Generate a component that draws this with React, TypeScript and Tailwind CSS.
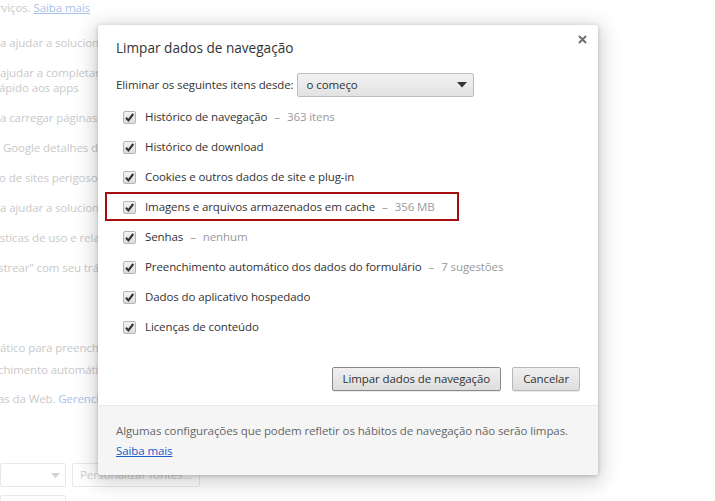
import React from "react";

type Item = { label: string; extra?: string; highlight?: boolean };

const items: Item[] = [
  { label: "Histórico de navegação", extra: "363 itens" },
  { label: "Histórico de download" },
  { label: "Cookies e outros dados de site e plug-in" },
  { label: "Imagens e arquivos armazenados em cache", extra: "356 MB", highlight: true },
  { label: "Senhas", extra: "nenhum" },
  { label: "Preenchimento automático dos dados do formulário", extra: "7 sugestões" },
  { label: "Dados do aplicativo hospedado" },
  { label: "Licenças de conteúdo" },
];

function Checkbox() {
  return (
    <span className="flex items-center justify-center w-[13px] h-[13px] shrink-0 border border-[#b5b5b5] rounded-[2px] bg-gradient-to-b from-[#f4f4f4] to-[#dcdcdc]">
      <svg width="11" height="11" viewBox="0 0 11 11">
        <path d="M2 5.8 L4.4 8.4 L9.2 2" fill="none" stroke="#333" strokeWidth="2.1" />
      </svg>
    </span>
  );
}

function GrayButton({ children, strong }: { children: React.ReactNode; strong?: boolean }) {
  return (
    <button
      className={`h-[24px] px-[10px] rounded-[2px] border bg-gradient-to-b from-[#f0f0f0] to-[#dedede] text-[#333] text-[11.5px] tracking-[-0.1px] leading-none shadow-[0_1px_0_rgba(0,0,0,0.08)] ${strong ? "border-[#8a8a8a]" : "border-[#b8b8b8]"}`}
    >
      {children}
    </button>
  );
}

function BackgroundPage() {
  const line = "h-[15px] leading-[15px] whitespace-nowrap text-[11.5px] tracking-[-0.1px] text-[#c9c9c9]";
  const link = "text-[#a9c3ec]";
  return (
    <div className="flex flex-col">
      <div className={`${line} -ml-[3px]`}>
        rviços. <span className={`${link} underline`}>Saiba mais</span>
      </div>
      <div className={`${line} mt-[20px]`}>a ajudar a solucionar</div>
      <div className={`${line} mt-[15px]`}>ajudar a completar</div>
      <div className={`${line} -ml-[1px]`}>ápido aos apps</div>
      <div className={`${line} mt-[15px]`}>a carregar páginas</div>
      <div className={`${line} mt-[15px] ml-[3px]`}>Google detalhes de</div>
      <div className={`${line} mt-[15px] -ml-[1px]`}>o de sites perigosos</div>
      <div className={`${line} mt-[15px]`}>a ajudar a solucionar</div>
      <div className={`${line} mt-[15px] -ml-[3px]`}>ísticas de uso e relat</div>
      <div className={`${line} mt-[15px] -ml-[2px]`}>strear" com seu tráfego</div>
      <div className={`${line} mt-[65px]`}>ático para preencher</div>
      <div className={`${line} mt-[7px] -ml-[2px] ${link}`}>chimento automático</div>
      <div className={`${line} mt-[14px] -ml-[2px]`}>
        as da Web. <span className={link}>Gerenciar</span>
      </div>
      <div className="flex gap-[6px] mt-[57px]">
        <div className="w-[66px] h-[24px] shrink-0 border border-[#e8e8e8] rounded-[2px] flex items-center justify-end pr-[5px]">
          <svg width="9" height="5" viewBox="0 0 9 5">
            <path d="M0 0 H9 L4.5 5 Z" fill="#d2d2d2" />
          </svg>
        </div>
        <div className="h-[24px] w-[128px] shrink-0 border border-[#e8e8e8] rounded-[2px] flex items-center justify-center text-[11.5px] text-[#cfcfcf] whitespace-nowrap">
          Personalizar fontes...
        </div>
      </div>
      <div className="w-[66px] h-[24px] mt-[8px] border border-[#e8e8e8] rounded-[2px]" />
    </div>
  );
}

export default function App() {
  return (
    <div
      className="relative w-[715px] h-[501px] overflow-hidden bg-white"
      style={{ fontFamily: '"Open Sans", "Noto Sans", sans-serif' }}
    >
      <BackgroundPage />

      {/* Dialog */}
      <div className="absolute left-[98px] top-[25px] w-[500px] bg-white rounded-[3px] shadow-[0_4px_20px_4px_rgba(0,0,0,0.18),0_1px_4px_rgba(0,0,0,0.2)] flex flex-col">
        <button className="absolute right-[11px] top-[10px] w-[9px] h-[9px]">
          <svg width="9" height="9" viewBox="0 0 9 9">
            <path d="M1 1 L8 8 M8 1 L1 8" stroke="#707070" strokeWidth="2" />
          </svg>
        </button>

        <div className="px-[18px] pt-[13px]">
          <h1 className="h-[20px] leading-[20px] text-[13.6px] text-[#333]">Limpar dados de navegação</h1>

          <div className="flex items-center gap-[3px] mt-[15px] h-[24px] text-[11.5px] tracking-[-0.1px]">
            <span className="text-[#333] whitespace-nowrap">Eliminar os seguintes itens desde:</span>
            <div className="w-[177px] h-[24px] border border-[#bcbcbc] rounded-[2px] bg-gradient-to-b from-[#f2f2f2] to-[#e2e2e2] flex items-center justify-between pl-[9px] pr-[6px]">
              <span className="text-[#333]">o começo</span>
              <svg width="10" height="6" viewBox="0 0 10 6">
                <path d="M0 0 H10 L5 5.5 Z" fill="#333" />
              </svg>
            </div>
          </div>

          <div className="flex flex-col mt-[5px] pl-[7px] text-[11.5px] tracking-[-0.1px]">
            {items.map((it) => (
              <div key={it.label} className="relative flex items-center gap-[9px] h-[30px]">
                {it.highlight && (
                  <span className="absolute -left-[18px] top-[0px] w-[354px] h-[29px] border-2 border-[#a50f0f]" />
                )}
                <Checkbox />
                <span className="text-[#333] whitespace-nowrap">
                  {it.label}
                  {it.extra && (
                    <span className="text-[#999]">
                      <span className="mx-[7px]">–</span>
                      {it.extra}
                    </span>
                  )}
                </span>
              </div>
            ))}
          </div>

          <div className="flex justify-end gap-[11px] mt-[25px]">
            <GrayButton strong>Limpar dados de navegação</GrayButton>
            <GrayButton>Cancelar</GrayButton>
          </div>
        </div>

        <div className="mt-[14px] border-t border-[#e8e8e8] bg-[#f5f5f5] rounded-b-[3px] h-[70px] px-[18px] pt-[16px] text-[11.5px] tracking-[-0.1px]">
          <p className="text-[#666] leading-[18px] whitespace-nowrap">
            Algumas configurações que podem refletir os hábitos de navegação não serão limpas.
          </p>
          <a className="block text-[#1a5bc7] underline leading-[18px] mt-[2px]">Saiba mais</a>
        </div>
      </div>
    </div>
  );
}
